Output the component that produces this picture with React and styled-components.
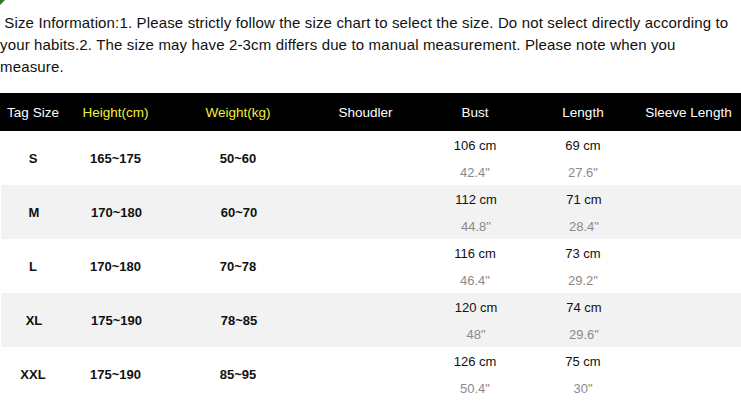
import React from "react";
import styled, { createGlobalStyle } from "styled-components";

const Global = createGlobalStyle`
  html, body { margin: 0; padding: 0; background: #fff; }
  body { font-family: "Liberation Sans", Arial, sans-serif; }
`;

const Page = styled.div`
  position: relative;
  width: 741px;
  height: 403px;
  overflow: hidden;
  background: #fff;
`;

const Corner = styled.svg`
  position: absolute;
  left: 0;
  top: 0;
`;

const Intro = styled.p`
  margin: 0;
  padding: 12px 0 0 0;
  height: 93px;
  box-sizing: border-box;
  font-size: 15px;
  line-height: 22px;
  color: #111;
  letter-spacing: 0.15px;
`;

const COLS = "66px 99px 146px 109px 110px 106px 105px";

const HeaderRow = styled.div`
  display: grid;
  grid-template-columns: ${COLS};
  height: 38px;
  background: #000;
  align-items: center;
`;

const HeadCell = styled.div`
  text-align: center;
  font-size: 13.5px;
  color: ${(p) => (p.$accent ? "#f4ef3a" : "#fff")};
`;

const Row = styled.div`
  display: grid;
  grid-template-columns: ${COLS};
  height: 54px;
  align-items: center;
  background: ${(p) => (p.$striped ? "#f2f2f2" : "#fff")};
  margin-left: ${(p) => (p.$striped ? "1px" : "0")};
`;

const BoldCell = styled.div`
  text-align: center;
  font-size: 13px;
  font-weight: bold;
  color: #111;
`;

const MeasureCell = styled.div`
  display: flex;
  flex-direction: column;
  align-items: center;
  font-size: 13px;
  padding-top: 1px;
`;

const Cm = styled.span`
  line-height: 27px;
  color: #111;
`;

const Inch = styled.span`
  line-height: 27px;
  color: #8a8a8a;
`;

const headers = [
  { t: "Tag Size" },
  { t: "Height(cm)", accent: true },
  { t: "Weight(kg)", accent: true },
  { t: "Shoudler" },
  { t: "Bust" },
  { t: "Length" },
  { t: "Sleeve Length" },
];

const rows = [
  { size: "S", h: "165~175", w: "50~60", bust: ["106 cm", '42.4"'], len: ["69 cm", '27.6"'] },
  { size: "M", h: "170~180", w: "60~70", bust: ["112 cm", '44.8"'], len: ["71 cm", '28.4"'] },
  { size: "L", h: "170~180", w: "70~78", bust: ["116 cm", '46.4"'], len: ["73 cm", '29.2"'] },
  { size: "XL", h: "175~190", w: "78~85", bust: ["120 cm", '48"'], len: ["74 cm", '29.6"'] },
  { size: "XXL", h: "175~190", w: "85~95", bust: ["126 cm", '50.4"'], len: ["75 cm", '30"'] },
];

const Measure = ({ v }) => (
  <MeasureCell>
    <Cm>{v[0]}</Cm>
    <Inch>{v[1]}</Inch>
  </MeasureCell>
);

export default function App() {
  return (
    <Page>
      <Global />
      <Corner width="6" height="6" viewBox="0 0 6 6">
        <polygon points="0,0 5,0 0,5" fill="#2f7a1f" />
      </Corner>
      <Intro>
        &nbsp;Size Information:1. Please strictly follow the size chart to select the size. Do not select directly according to your habits.2. The size may have 2-3cm differs due to manual measurement. Please note when you measure.
      </Intro>
      <HeaderRow>
        {headers.map((h) => (
          <HeadCell key={h.t} $accent={h.accent}>
            {h.t}
          </HeadCell>
        ))}
      </HeaderRow>
      {rows.map((r, i) => (
        <Row key={r.size} $striped={i % 2 === 1}>
          <BoldCell>{r.size}</BoldCell>
          <BoldCell>{r.h}</BoldCell>
          <BoldCell>{r.w}</BoldCell>
          <div />
          <Measure v={r.bust} />
          <Measure v={r.len} />
          <div />
        </Row>
      ))}
    </Page>
  );
}
